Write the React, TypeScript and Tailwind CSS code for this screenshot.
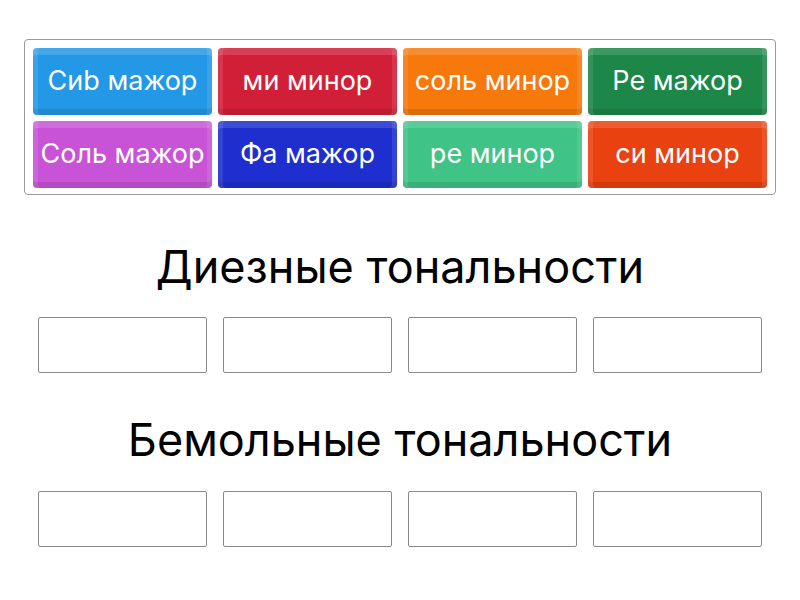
import React from "react";

const tiles = [
  { label: "Сиb мажор", bg: "bg-[#2398e6]" },
  { label: "ми минор", bg: "bg-[#d21f38]" },
  { label: "соль минор", bg: "bg-[#f7780b]" },
  { label: "Ре мажор", bg: "bg-[#1d8748]" },
  { label: "Соль мажор", bg: "bg-[#c853d6]" },
  { label: "Фа мажор", bg: "bg-[#1e2ecf]" },
  { label: "ре минор", bg: "bg-[#3fc386]" },
  { label: "си минор", bg: "bg-[#ea4110]" },
];

function DropRow() {
  return (
    <div className="mx-[38px] grid grid-cols-4 gap-[16px]">
      {[0, 1, 2, 3].map((i) => (
        <div key={i} className="h-[56px] rounded-[2px] border border-[#8a8a8a] bg-white" />
      ))}
    </div>
  );
}

export default function App() {
  return (
    <div className="w-[800px] h-[600px] bg-white overflow-hidden font-['Inter','Noto_Sans',sans-serif]">
      {/* tiles to sort */}
      <div className="mx-[24px] mt-[39px] rounded-[4px] border border-[#9a9a9a] p-[8px] pb-[6px] grid grid-cols-4 gap-[6px]">
        {tiles.map((t) => (
          <div
            key={t.label}
            className={`${t.bg} h-[67px] pb-[1px] rounded-[4px] flex items-center justify-center text-white text-[27px] whitespace-nowrap shadow-[inset_0_7px_0_rgba(255,255,255,0.14),inset_5px_0_0_rgba(255,255,255,0.1),inset_-5px_0_0_rgba(255,255,255,0.1),inset_0_-6px_0_rgba(0,0,0,0.1)]`}
          >
            {t.label}
          </div>
        ))}
      </div>

      <h2 className="mt-[44px] h-[56px] leading-[56px] text-center text-[45px] text-black">Диезные тональности</h2>
      <div className="mt-[22px]">
        <DropRow />
      </div>

      <h2 className="mt-[39px] h-[56px] leading-[56px] text-center text-[45px] text-black">Бемольные тональности</h2>
      <div className="mt-[23px]">
        <DropRow />
      </div>
    </div>
  );
}
